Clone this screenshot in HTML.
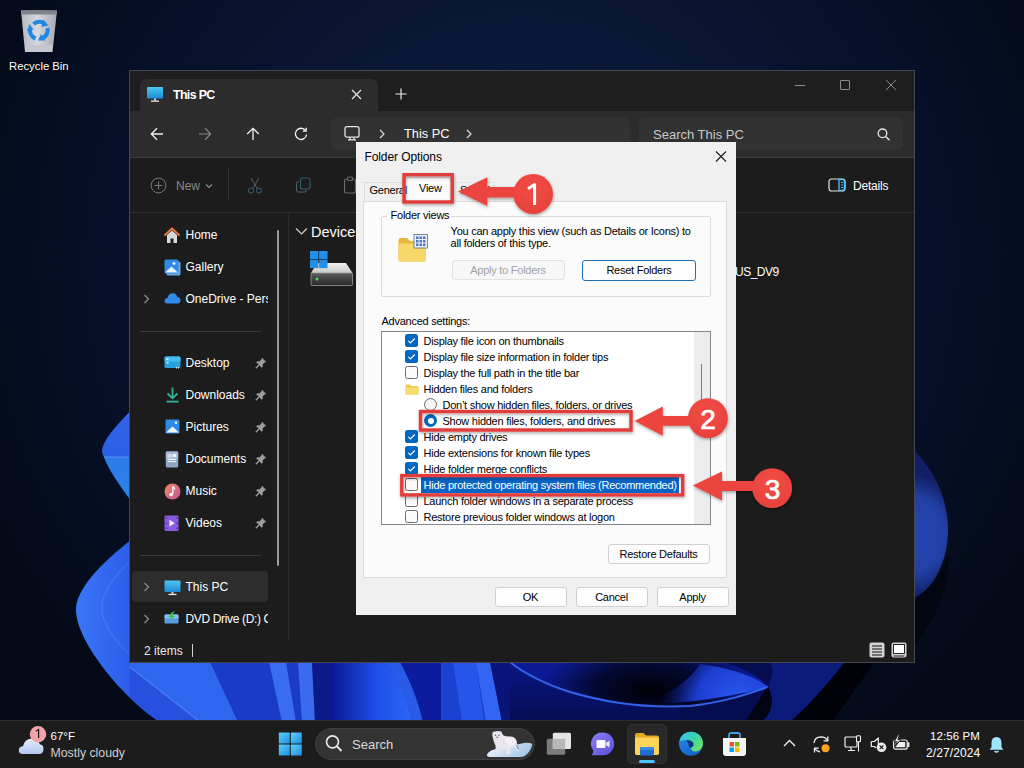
<!DOCTYPE html>
<html><head><meta charset="utf-8">
<style>
*{margin:0;padding:0;box-sizing:border-box}
html,body{width:1024px;height:768px;overflow:hidden;background:#050c1c;font-family:"Liberation Sans",sans-serif}
.a{position:absolute}
.t{position:absolute;white-space:nowrap;line-height:1}
#desk{position:absolute;left:0;top:0;width:1024px;height:768px;background:radial-gradient(ellipse 700px 500px at 520px 560px,#0a1c46 0%,#071333 45%,#050c1f 80%,#040a18 100%)}
/* explorer */
#exp{position:absolute;left:129px;top:70px;width:786px;height:593px;background:#1c1c1c;border:1px solid #44474c;overflow:hidden}
#tabs{position:absolute;left:0;top:0;width:784px;height:40px;background:#1e1e1e}
#tab{position:absolute;left:10px;top:8px;width:238px;height:32px;background:#2c2c2c;border-radius:7px 7px 0 0}
#addr{position:absolute;left:0;top:40px;width:784px;height:47px;background:#2c2c2c;border-bottom:1px solid #3a3a3a}
#cmd{position:absolute;left:0;top:87px;width:784px;height:55px;background:#1c1c1c;border-bottom:1px solid #2f2f2f}
.w{color:#fff}
.nav{position:absolute;left:55px;font-size:12.5px;color:#fff;line-height:1}
/* dialog */
#dlg{position:absolute;left:356px;top:142px;width:380px;height:473px;background:#f0f0f0;font-size:11px;letter-spacing:-0.25px;color:#000}
.btn{position:absolute;background:#fdfdfd;border:1px solid #d0d0d0;border-radius:3px;text-align:center;font-size:11px;line-height:18px;color:#000}
.row{position:absolute;left:41px;font-size:11px;line-height:1;color:#000;white-space:nowrap}
.cb{position:absolute;left:23px;width:13px;height:13px;border-radius:3px}
.cbc{background:#0067c0;}
.cbu{background:#fbfbfb;border:1px solid #8a8a8a}
/* taskbar */
#tb{position:absolute;left:0;top:720px;width:1024px;height:48px;background:#1c1c1c;border-top:1px solid #2e2e2e}
</style></head><body>
<svg id="desk" class="a" style="left:0;top:0" width="1024" height="768" viewBox="0 0 1024 768">
  <defs>
    <radialGradient id="bg" cx="520" cy="260" r="580" gradientUnits="userSpaceOnUse"><stop offset="0" stop-color="#0c1f48"/><stop offset="0.35" stop-color="#0a1838"/><stop offset="0.72" stop-color="#071029"/><stop offset="1" stop-color="#040a18"/></radialGradient>
    <linearGradient id="p1" x1="0" y1="0" x2="0" y2="1"><stop offset="0" stop-color="#3566ea"/><stop offset="1" stop-color="#2a5ee6"/></linearGradient>
    <linearGradient id="p2" x1="0" y1="0" x2="0" y2="1"><stop offset="0" stop-color="#2f78ea"/><stop offset="1" stop-color="#2a86e8"/></linearGradient>
    <linearGradient id="p3" x1="0" y1="0" x2="1" y2="0"><stop offset="0" stop-color="#3272f8"/><stop offset="1" stop-color="#2a58e8"/></linearGradient>
    <radialGradient id="rs" cx="905" cy="535" r="62" gradientUnits="userSpaceOnUse"><stop offset="0" stop-color="#2846b8"/><stop offset="0.65" stop-color="#2240a4"/><stop offset="1" stop-color="#121f66"/></radialGradient>
    <linearGradient id="bt" x1="0" y1="0" x2="1" y2="0"><stop offset="0" stop-color="#2a5cf0"/><stop offset="0.3" stop-color="#2448d8"/><stop offset="0.55" stop-color="#1a36c0"/><stop offset="1" stop-color="#1a34b0"/></linearGradient>
  </defs>
  <rect width="1024" height="768" fill="url(#bg)"/>
  <!-- left upper petal -->
  <path d="M136 405 C122 420 103 438 102 451 C102 454 104 457 107 458 L136 458 Z" fill="url(#p1)"/>
  <path d="M102 451 C106 468 122 488 136 508 L136 457 L106 457 C104 456 102 454 102 451Z" fill="url(#p2)"/>
  <path d="M104 457 H136" stroke="#6a9cf8" stroke-width="1" opacity="0.7"/>
  <!-- left lower petal / bottom swoosh -->
  <linearGradient id="glow" x1="330" y1="0" x2="420" y2="0" gradientUnits="userSpaceOnUse"><stop offset="0" stop-color="#0a1690"/><stop offset="0.5" stop-color="#1e4ee8"/><stop offset="1" stop-color="#2e6cf8"/></linearGradient>
  <linearGradient id="lp" x1="76" y1="0" x2="136" y2="0" gradientUnits="userSpaceOnUse"><stop offset="0" stop-color="#3a76f8"/><stop offset="1" stop-color="#2a5ae8"/></linearGradient>
  <path d="M136 536 C110 556 78 584 76 608 C75 632 100 666 122 690 C135 704 150 716 160 722 L136 722 Z" fill="url(#lp)"/>
  <rect x="130" y="662" width="380" height="60" fill="#1a3ac8"/>
  <path d="M130 662 L210 662 L238 722 L130 722Z" fill="#2e66f0"/>
  <path d="M130 667 L200 722 L130 722Z" fill="#2850de"/>
  <path d="M130 667 L200 722" stroke="#5a8cf8" stroke-width="1.2" opacity="0.7"/>
  <path d="M269 662 L286 662 L296 722 L282 722Z" fill="#3a6cf2"/>
  <path d="M298 662 L312 662 L315 722 L302 722Z" fill="#3a6af0"/>
  <path d="M312 662 L330 662 L330 722 L315 722Z" fill="#0c1a88"/>
  <path d="M330 662 L386 662 C398 680 408 700 412 722 L330 722Z" fill="url(#glow)"/>
  <path d="M386 662 L400 662 C410 680 418 700 423 722 L412 722 C408 700 398 680 386 662Z" fill="#2a5ae8"/>
  <path d="M400 662 L441 662 L441 722 L423 722 C418 700 410 680 400 662Z" fill="#0c1c9c"/>
  <path d="M441 662 L478 662 L488 722 L441 722Z" fill="#1c40d0"/>
  <path d="M453 662 L476 662 L484 722 L462 722Z" fill="#2a5af0" opacity="0.8"/>
  <path d="M476 662 L490 662 L502 722 L486 722Z" fill="#3464f2"/>
  <path d="M490 662 L512 662 L512 722 L502 722Z" fill="#0a1478"/>
  <path d="M40 640 L97 662 C108 676 115 684 122 690 C135 704 150 716 162 724 L40 724 Z" fill="url(#bg)"/>
  <path d="M136 556 C118 572 102 590 102 608 C102 625 118 645 136 660" stroke="#5a8cf8" stroke-width="1" fill="none" opacity="0.6"/>
  <!-- swoosh -->
  <linearGradient id="sw1" x1="0" y1="662" x2="0" y2="722" gradientUnits="userSpaceOnUse"><stop offset="0" stop-color="#0a1888"/><stop offset="1" stop-color="#050c50"/></linearGradient>
  <radialGradient id="swd" cx="650" cy="690" r="110" gradientTransform="translate(650 690) scale(1 0.45) translate(-650 -690)" gradientUnits="userSpaceOnUse"><stop offset="0" stop-color="#000006"/><stop offset="0.5" stop-color="#030830"/><stop offset="1" stop-color="#0c1a96"/></radialGradient>
  <radialGradient id="sw2" cx="740" cy="705" r="80" gradientUnits="userSpaceOnUse"><stop offset="0" stop-color="#2e5cf4"/><stop offset="0.55" stop-color="#1c3ed0"/><stop offset="1" stop-color="#0c1a80" stop-opacity="0"/></radialGradient>
  <rect x="510" y="662" width="370" height="60" fill="url(#sw1)"/>
  <path d="M510 662 L780 662 L780 690 C750 694 720 702 680 706 C640 708 600 700 565 688 C540 680 522 672 510 662Z" fill="url(#swd)"/>
  <path d="M680 706 C720 702 750 694 768 687 C760 676 740 666 720 662 L780 662 L780 722 L680 722Z" fill="#050c50"/>
  <path d="M640 704 C690 704 735 696 768 687 C755 676 730 668 700 664 C690 680 670 695 640 704Z" fill="url(#sw2)"/>
  <path d="M510 662 C525 674 545 684 570 692 C610 704 650 708 690 706 C725 702 748 694 768 687" stroke="#3a6cf6" stroke-width="2" fill="none" opacity="0.9"/>
  <path d="M768 687 C775 700 772 712 762 722 L790 722 C815 700 830 680 845 662 L770 662 C774 670 772 680 768 687Z" fill="#0c1a7a"/>
  <path d="M768 687 C775 700 772 712 762 722 L745 722 C752 712 758 700 768 687Z" fill="#020414"/>
  <path d="M845 662 L876 662 C858 685 845 705 832 722 L790 722 C815 700 830 680 845 662Z" fill="#010208"/>
  <path d="M876 662 L900 662 L900 722 L832 722 C845 705 858 685 876 662Z" fill="url(#bg)"/>
  <!-- right shape -->
  <path d="M900 440 C925 455 948 490 948 530 C948 560 935 585 915 600 L900 600Z" fill="url(#rs)"/>
  <path d="M915 598 C935 585 946 570 948 550 C952 585 935 620 915 645Z" fill="#02050f" opacity="0.9"/>
</svg>

<!-- recycle bin -->
<svg class="a" style="left:0;top:0" width="90" height="80" viewBox="0 0 90 80">
  <defs><linearGradient id="rb" x1="0" x2="1"><stop offset="0" stop-color="#b4b8c0"/><stop offset="0.45" stop-color="#d6d9de"/><stop offset="1" stop-color="#a4a8b0"/></linearGradient>
  <linearGradient id="rbv" x1="0" y1="0" x2="0" y2="1"><stop offset="0" stop-color="#ffffff" stop-opacity="0.15"/><stop offset="1" stop-color="#ffffff" stop-opacity="0"/></linearGradient></defs>
  <path d="M21 10.5 L57 10.5 L52.5 52 L25 52 Z" fill="url(#rb)"/>
  <path d="M21 10.5 L57 10.5 L56.3 14.5 L21.6 14.5 Z" fill="#7e838c"/>
  <path d="M25 45 L52.5 45 L52 52 L25.6 52Z" fill="#c4c8ce"/>
  <g fill="none" stroke="#1f8ae6" stroke-width="4.2" stroke-linecap="butt">
    <path d="M33.5 24 A9 9 0 0 1 44.5 23.5"/>
    <path d="M47.5 28 A9 9 0 0 1 42 38.5"/>
    <path d="M35.5 38.5 A9 9 0 0 1 30 29"/>
  </g>
  <g fill="#1f8ae6"><path d="M43 19.5 L48.5 25.5 L41.5 27Z"/><path d="M45.5 40.5 L38 40.5 L41 34Z"/><path d="M27 31 L29.5 24 L33.5 29.5Z"/></g>
</svg>
<div class="t" style="left:9px;top:61px;font-size:11.3px;color:#fff;text-shadow:0 1px 2px #000">Recycle Bin</div>

<!-- explorer -->
<div id="exp">
  <div id="tabs"></div>
  <div id="tab"></div>
  <div id="addr"></div>
  <div id="cmd"></div>
</div>
<!-- tab content -->
<svg class="a" style="left:146px;top:86px" width="18" height="17" viewBox="0 0 18 17">
  <defs><linearGradient id="mon" x1="0" y1="0" x2="0" y2="1"><stop offset="0" stop-color="#4cc8f0"/><stop offset="1" stop-color="#1f8ad6"/></linearGradient></defs>
  <rect x="1" y="1" width="16" height="11.5" rx="0.8" fill="url(#mon)"/>
  <rect x="8" y="12.5" width="2" height="2" fill="#d8d8d8"/>
  <rect x="5" y="14.5" width="8" height="1.3" fill="#e8e8e8"/>
</svg>
<div class="t" style="left:173px;top:88.6px;font-size:12.4px;font-weight:bold;color:#fff;letter-spacing:-0.65px">This PC</div>
<svg class="a" style="left:351px;top:89px" width="11" height="11" viewBox="0 0 11 11"><path d="M1 1 L10 10 M10 1 L1 10" stroke="#e8e8e8" stroke-width="1.2"/></svg>
<svg class="a" style="left:395px;top:88px" width="12" height="12" viewBox="0 0 12 12"><path d="M6 0.5 V11.5 M0.5 6 H11.5" stroke="#e8e8e8" stroke-width="1.2"/></svg>
<!-- window controls -->
<div class="a" style="left:795px;top:85px;width:10px;height:1px;background:#8c8c8c"></div>
<div class="a" style="left:840px;top:80px;width:10px;height:10px;border:1px solid #8c8c8c;border-radius:1px"></div>
<svg class="a" style="left:885px;top:79px" width="12" height="12" viewBox="0 0 12 12"><path d="M1 1 L11 11 M11 1 L1 11" stroke="#8c8c8c" stroke-width="1"/></svg>
<!-- nav buttons -->
<svg class="a" style="left:150px;top:127px" width="14" height="14" viewBox="0 0 14 14"><path d="M13 7 H1.5 M7 1.2 L1.3 7 L7 12.8" stroke="#f0f0f0" stroke-width="1.3" fill="none"/></svg>
<svg class="a" style="left:198px;top:127px" width="14" height="14" viewBox="0 0 14 14"><path d="M1 7 H12.5 M7 1.2 L12.7 7 L7 12.8" stroke="#8a8a8a" stroke-width="1.2" fill="none"/></svg>
<svg class="a" style="left:246px;top:127px" width="14" height="14" viewBox="0 0 14 14"><path d="M7 13 V1.5 M1.2 7 L7 1.3 L12.8 7" stroke="#f0f0f0" stroke-width="1.3" fill="none"/></svg>
<svg class="a" style="left:294px;top:127px" width="14" height="14" viewBox="0 0 14 14"><path d="M11.6 3.6 A5.6 5.6 0 1 0 12.6 7.5" stroke="#f0f0f0" stroke-width="1.3" fill="none"/><path d="M12.2 0.8 V4.2 H8.8" stroke="#f0f0f0" stroke-width="1.3" fill="none"/></svg>
<!-- address box -->
<div class="a" style="left:331px;top:118px;width:299px;height:32px;background:#323232;border-radius:5px"></div>
<svg class="a" style="left:344px;top:126px" width="16" height="15" viewBox="0 0 16 15"><rect x="1" y="0.7" width="14" height="10.5" rx="2" stroke="#e6e6e6" stroke-width="1.3" fill="none"/><path d="M6 11.5 V13.5 M10 11.5 V13.5 M4 13.8 H12" stroke="#e6e6e6" stroke-width="1.2"/></svg>
<svg class="a" style="left:378px;top:129px" width="8" height="10" viewBox="0 0 8 10"><path d="M2 1 L6 5 L2 9" stroke="#dcdcdc" stroke-width="1.2" fill="none"/></svg>
<div class="t" style="left:404px;top:128px;font-size:12.8px;color:#fff">This PC</div>
<svg class="a" style="left:465px;top:129px" width="8" height="10" viewBox="0 0 8 10"><path d="M2 1 L6 5 L2 9" stroke="#dcdcdc" stroke-width="1.2" fill="none"/></svg>
<!-- search box -->
<div class="a" style="left:639px;top:118px;width:264px;height:32px;background:#323232;border-radius:5px"></div>
<div class="t" style="left:653px;top:128px;font-size:13px;color:#c8c8c8">Search This PC</div>
<svg class="a" style="left:877px;top:128px" width="14" height="13" viewBox="0 0 14 13"><circle cx="5.5" cy="5.3" r="4.3" stroke="#e8e8e8" stroke-width="1.3" fill="none"/><path d="M8.6 8.4 L12.5 12.2" stroke="#e8e8e8" stroke-width="1.4"/></svg>
<!-- command bar -->
<svg class="a" style="left:150px;top:177px" width="17" height="17" viewBox="0 0 17 17"><circle cx="8.5" cy="8.5" r="7.4" stroke="#7a7a7a" stroke-width="1" fill="none"/><path d="M8.5 4.5 V12.5 M4.5 8.5 H12.5" stroke="#7a7a7a" stroke-width="1"/></svg>
<div class="t" style="left:176px;top:180px;font-size:12px;color:#8a8a8a">New</div>
<svg class="a" style="left:204.5px;top:182.5px" width="8" height="6" viewBox="0 0 8 6"><path d="M1 1.5 L4 4.5 L7 1.5" stroke="#8e8e8e" stroke-width="1.1" fill="none"/></svg>
<div class="a" style="left:228px;top:169px;width:1px;height:30px;background:#343434"></div>
<svg class="a" style="left:247px;top:177px" width="16" height="17" viewBox="0 0 16 17"><path d="M4 1 L10.5 12 M12 1 L5.5 12" stroke="#5a6068" stroke-width="1" fill="none"/><circle cx="4" cy="13.5" r="2.5" stroke="#37627a" stroke-width="1" fill="none"/><circle cx="12" cy="13.5" r="2.5" stroke="#37627a" stroke-width="1" fill="none"/></svg>
<svg class="a" style="left:295px;top:177px" width="17" height="17" viewBox="0 0 17 17"><rect x="5.5" y="1" width="9.5" height="11" rx="2" stroke="#2f5f7a" stroke-width="1.1" fill="none"/><path d="M3.5 4.5 Q1.5 4.5 1.5 6.5 V13 Q1.5 15 3.5 15 H9.5 Q11.5 15 11.5 13" stroke="#5a6068" stroke-width="1" fill="none"/></svg>
<svg class="a" style="left:343px;top:176px" width="14" height="18" viewBox="0 0 14 18"><rect x="1.5" y="3" width="11" height="14" rx="2" stroke="#6a6a6a" stroke-width="1.1" fill="none"/><rect x="4.5" y="1" width="5" height="3.5" rx="1" stroke="#6a6a6a" stroke-width="1.1" fill="#1c1c1c"/></svg>
<svg class="a" style="left:828px;top:178px" width="18" height="14" viewBox="0 0 18 14"><rect x="1" y="1" width="16" height="12" rx="2.5" stroke="#e6e6e6" stroke-width="1.2" fill="none"/><path d="M11 1 V13" stroke="#4cc2ff" stroke-width="1.3"/><path d="M11.5 1.6 H14.5 Q16.4 1.6 16.4 3.5 V10.5 Q16.4 12.4 14.5 12.4 H11.5" stroke="#4cc2ff" stroke-width="1.2" fill="none"/><path d="M13 4.5 H15 M13 7 H15 M13 9.5 H15" stroke="#4cc2ff" stroke-width="1"/></svg>
<div class="t" style="left:853px;top:179.5px;font-size:12px;color:#fff;letter-spacing:-0.2px">Details</div>


<!-- nav pane -->
<div class="a" style="left:288px;top:212px;width:1px;height:428px;background:#2a2a2a"></div>
<div class="a" style="left:277px;top:230px;width:2px;height:336px;background:#9a9a9a;border-radius:1px"></div>
<div class="a" style="left:140px;top:331px;width:121px;height:1px;background:#3a3a3a"></div>
<div class="a" style="left:140px;top:555px;width:121px;height:1px;background:#3a3a3a"></div>
<div class="a" style="left:132px;top:571px;width:136px;height:31px;background:#2d2d2d;border-radius:4px"></div>
<div class="a" style="left:131px;top:212px;width:137px;height:428px;overflow:hidden">
  <div class="t" style="left:54.5px;top:17px;font-size:12px;color:#fff">Home</div>
  <div class="t" style="left:54.5px;top:49px;font-size:12px;color:#fff">Gallery</div>
  <div class="t" style="left:54.5px;top:81px;font-size:12px;color:#fff">OneDrive - Personal</div>
  <div class="t" style="left:54.5px;top:145px;font-size:12px;color:#fff">Desktop</div>
  <div class="t" style="left:54.5px;top:177px;font-size:12px;color:#fff">Downloads</div>
  <div class="t" style="left:54.5px;top:209px;font-size:12px;color:#fff">Pictures</div>
  <div class="t" style="left:54.5px;top:241px;font-size:12px;color:#fff">Documents</div>
  <div class="t" style="left:54.5px;top:273px;font-size:12px;color:#fff">Music</div>
  <div class="t" style="left:54.5px;top:305px;font-size:12px;color:#fff">Videos</div>
  <div class="t" style="left:54.5px;top:369px;font-size:12px;color:#fff">This PC</div>
  <div class="t" style="left:54.5px;top:401px;font-size:12px;color:#fff;letter-spacing:-0.35px">DVD Drive (D:) CCCOMA_X64FRE</div>
</div>
<!-- chevrons -->
<svg class="a" style="left:143px;top:294px" width="8" height="10" viewBox="0 0 8 10"><path d="M1.5 1 L5.5 5 L1.5 9" stroke="#8a8a8a" stroke-width="1.3" fill="none"/></svg>
<svg class="a" style="left:143px;top:582px" width="8" height="10" viewBox="0 0 8 10"><path d="M1.5 1 L5.5 5 L1.5 9" stroke="#8a8a8a" stroke-width="1.3" fill="none"/></svg>
<svg class="a" style="left:143px;top:614px" width="8" height="10" viewBox="0 0 8 10"><path d="M1.5 1 L5.5 5 L1.5 9" stroke="#8a8a8a" stroke-width="1.3" fill="none"/></svg>
<!-- nav icons -->
<svg class="a" style="left:164px;top:227px" width="16" height="17" viewBox="0 0 16 17"><path d="M3 8 V16 H6.5 V11.5 H9.5 V16 H13 V8 L8 3.5 Z" fill="#d9d9d9"/><path d="M0.5 8.5 L8 1.5 L15.5 8.5" stroke="#e0773a" stroke-width="2.2" fill="none" stroke-linejoin="round"/></svg>
<svg class="a" style="left:164px;top:259px" width="17" height="17" viewBox="0 0 17 17"><rect x="2.5" y="2.5" width="14" height="14" rx="1.5" fill="#6aa8e8"/><rect x="0.5" y="0.5" width="14" height="14" rx="1.5" fill="#2f8ae6"/><path d="M1 13.5 L7.5 7.5 L14 13.5 Z" fill="#e8f2ff"/><circle cx="10" cy="4.5" r="1.4" fill="#e8f2ff"/></svg>
<svg class="a" style="left:164px;top:292px" width="17" height="12" viewBox="0 0 17 12"><path d="M3.5 11.5 Q0.3 11.5 0.5 8.5 Q0.8 6 3.5 6 Q4.5 1 9 1.2 Q12.6 1.4 13.3 5 Q16.5 5.3 16.5 8.3 Q16.5 11.5 13.5 11.5 Z" fill="#2e8be8"/></svg>
<svg class="a" style="left:164px;top:356px" width="17" height="13" viewBox="0 0 17 13"><rect x="0.5" y="0.5" width="16" height="11.5" rx="1.5" fill="#27a4e0"/><rect x="0.5" y="0.5" width="16" height="5" rx="1.5" fill="#45bdf0"/><rect x="2.5" y="2.3" width="2" height="1.6" fill="#e8f6ff"/><rect x="2.5" y="5.8" width="2" height="1.6" fill="#e8f6ff"/><rect x="12" y="11" width="1" height="1.5" fill="#e8f6ff"/><rect x="14" y="11" width="1" height="1.5" fill="#e8f6ff"/></svg>
<svg class="a" style="left:166px;top:387px" width="13" height="16" viewBox="0 0 13 16"><path d="M6.5 0.5 V11 M1.5 6.5 L6.5 11.3 L11.5 6.5" stroke="#2fb59b" stroke-width="1.8" fill="none"/><path d="M0.5 14.6 H12.5" stroke="#2fb59b" stroke-width="1.8"/></svg>
<svg class="a" style="left:165px;top:419px" width="15" height="15" viewBox="0 0 15 15"><rect x="0.5" y="0.5" width="14" height="14" rx="1.2" fill="#2f8ae6"/><path d="M1 13.5 L7.5 7.5 L14 13.5 Z" fill="#f0f6ff"/><circle cx="11" cy="3.8" r="1.3" fill="#f0f6ff"/></svg>
<svg class="a" style="left:165px;top:451px" width="14" height="17" viewBox="0 0 14 17"><rect x="0.8" y="0.5" width="12.4" height="16" rx="1.2" fill="#8ea8c8"/><rect x="0.8" y="0.5" width="12.4" height="8" rx="1.2" fill="#a8bcd6"/><path d="M2.8 4 H7 M2.8 6 H7 M2.8 8.5 H11 M2.8 10.5 H11" stroke="#f4f8ff" stroke-width="1"/><rect x="8" y="3" width="3" height="3" fill="#f4f8ff"/></svg>
<svg class="a" style="left:164px;top:483px" width="17" height="17" viewBox="0 0 17 17"><defs><linearGradient id="mus" x1="0" y1="0" x2="1" y2="1"><stop offset="0" stop-color="#f08a5a"/><stop offset="1" stop-color="#c2549a"/></linearGradient></defs><circle cx="8.5" cy="8.5" r="8" fill="url(#mus)"/><path d="M8.8 3.5 V11" stroke="#fff" stroke-width="1.3"/><circle cx="7.2" cy="11.5" r="1.8" fill="#fff"/><path d="M8.8 3.5 Q11 4.5 10.8 6.5" stroke="#fff" stroke-width="1.1" fill="none"/></svg>
<svg class="a" style="left:164px;top:515px" width="15" height="17" viewBox="0 0 15 17"><rect x="0.5" y="0.5" width="14" height="15.5" rx="1.2" fill="#8a5ae0"/><path d="M5.5 4.8 L10.8 8.2 L5.5 11.6 Z" fill="#f4eeff"/><g fill="#5a2fb0"><rect x="1.6" y="2.5" width="1.5" height="1.5"/><rect x="1.6" y="7.5" width="1.5" height="1.5"/><rect x="1.6" y="12.5" width="1.5" height="1.5"/><rect x="12" y="2.5" width="1.5" height="1.5"/><rect x="12" y="7.5" width="1.5" height="1.5"/><rect x="12" y="12.5" width="1.5" height="1.5"/></g></svg>
<svg class="a" style="left:164px;top:580px" width="17" height="16" viewBox="0 0 17 16"><rect x="0.5" y="0.5" width="16" height="11.5" rx="0.8" fill="url(#mon)"/><rect x="7.5" y="12" width="2" height="1.8" fill="#d8d8d8"/><rect x="4.5" y="13.8" width="8" height="1.3" fill="#e8e8e8"/></svg>
<svg class="a" style="left:164px;top:609px" width="16" height="15" viewBox="0 0 16 15"><rect x="0.5" y="5.5" width="14" height="9" rx="1.2" fill="#5b9ce0"/><rect x="0.5" y="5.5" width="14" height="4" rx="1.2" fill="#8bbcf0"/><path d="M7.5 10 L4.2 7 H6.2 Q6.5 3 11 2.2 Q8.5 3.8 8.8 7 H10.8 Z" fill="#2ecc40"/></svg>
<!-- pins -->
<svg class="a" style="left:255px;top:357px" width="12" height="12" viewBox="0 0 12 12"><path d="M7 0.8 L11.2 5 L9.6 5.6 L7.6 7.6 L7.8 9.8 L6.8 10.8 L1.2 5.2 L2.2 4.2 L4.4 4.4 L6.4 2.4 Z" fill="#9c9c9c"/><path d="M4 8 L0.8 11.2" stroke="#9c9c9c" stroke-width="1.3"/></svg>
<svg class="a" style="left:255px;top:389px" width="12" height="12" viewBox="0 0 12 12"><path d="M7 0.8 L11.2 5 L9.6 5.6 L7.6 7.6 L7.8 9.8 L6.8 10.8 L1.2 5.2 L2.2 4.2 L4.4 4.4 L6.4 2.4 Z" fill="#9c9c9c"/><path d="M4 8 L0.8 11.2" stroke="#9c9c9c" stroke-width="1.3"/></svg>
<svg class="a" style="left:255px;top:421px" width="12" height="12" viewBox="0 0 12 12"><path d="M7 0.8 L11.2 5 L9.6 5.6 L7.6 7.6 L7.8 9.8 L6.8 10.8 L1.2 5.2 L2.2 4.2 L4.4 4.4 L6.4 2.4 Z" fill="#9c9c9c"/><path d="M4 8 L0.8 11.2" stroke="#9c9c9c" stroke-width="1.3"/></svg>
<svg class="a" style="left:255px;top:453px" width="12" height="12" viewBox="0 0 12 12"><path d="M7 0.8 L11.2 5 L9.6 5.6 L7.6 7.6 L7.8 9.8 L6.8 10.8 L1.2 5.2 L2.2 4.2 L4.4 4.4 L6.4 2.4 Z" fill="#9c9c9c"/><path d="M4 8 L0.8 11.2" stroke="#9c9c9c" stroke-width="1.3"/></svg>
<svg class="a" style="left:255px;top:485px" width="12" height="12" viewBox="0 0 12 12"><path d="M7 0.8 L11.2 5 L9.6 5.6 L7.6 7.6 L7.8 9.8 L6.8 10.8 L1.2 5.2 L2.2 4.2 L4.4 4.4 L6.4 2.4 Z" fill="#9c9c9c"/><path d="M4 8 L0.8 11.2" stroke="#9c9c9c" stroke-width="1.3"/></svg>
<svg class="a" style="left:255px;top:517px" width="12" height="12" viewBox="0 0 12 12"><path d="M7 0.8 L11.2 5 L9.6 5.6 L7.6 7.6 L7.8 9.8 L6.8 10.8 L1.2 5.2 L2.2 4.2 L4.4 4.4 L6.4 2.4 Z" fill="#9c9c9c"/><path d="M4 8 L0.8 11.2" stroke="#9c9c9c" stroke-width="1.3"/></svg>
<!-- content -->
<svg class="a" style="left:295px;top:227px" width="13" height="9" viewBox="0 0 13 9"><path d="M1 1.5 L6.5 7 L12 1.5" stroke="#d0d0d0" stroke-width="1.2" fill="none"/></svg>
<div class="t" style="left:311px;top:225px;font-size:14.5px;color:#fff">Devices and drives</div>
<svg class="a" style="left:309px;top:250px" width="45" height="37" viewBox="0 0 45 37"><defs><linearGradient id="drv" x1="0" y1="0" x2="0" y2="1"><stop offset="0" stop-color="#5a5a5a"/><stop offset="1" stop-color="#2a2a2a"/></linearGradient><linearGradient id="drvt" x1="0" y1="0" x2="0" y2="1"><stop offset="0" stop-color="#f0f0f0"/><stop offset="1" stop-color="#c8c8c8"/></linearGradient></defs>
  <path d="M2 23 L8 13 H37 L43.5 23 Z" fill="url(#drvt)"/>
  <rect x="2" y="23" width="41.5" height="12.5" rx="1" fill="url(#drv)" stroke="#9a9a9a" stroke-width="0.8"/>
  <circle cx="8" cy="29" r="1.5" fill="#3ade5a"/>
  <g fill="#2290e8"><rect x="1" y="1" width="8.4" height="8.2"/><rect x="10.1" y="1" width="8.4" height="8.2"/><rect x="1" y="9.9" width="8.4" height="8.2"/><rect x="10.1" y="9.9" width="8.4" height="8.2"/></g>
</svg>
<div class="t" style="left:735px;top:266px;font-size:12px;color:#fff;letter-spacing:-0.5px">US_DV9</div>
<!-- status bar -->
<div class="t" style="left:144px;top:645px;font-size:12px;color:#e8e8e8">2 items</div>
<div class="a" style="left:192px;top:644px;width:1px;height:13px;background:#d0d0d0"></div>
<svg class="a" style="left:868px;top:641px" width="40" height="18" viewBox="0 0 40 18"><rect x="1.5" y="1.5" width="15" height="15" rx="2" fill="#d4d4d4"/><path d="M4 5 H14 M4 8 H14 M4 11 H14 M4 14 H14" stroke="#111" stroke-width="1"/><rect x="23.5" y="1.5" width="15" height="15" rx="2" fill="#d4d4d4"/><rect x="25.5" y="3.5" width="11" height="9" fill="#fff" stroke="#111" stroke-width="0.9"/><path d="M25.5 15 H36.5" stroke="#111" stroke-width="0.9"/></svg>

<!-- dialog -->
<div id="dlg">
  <div class="t" style="left:8.5px;top:8.6px;font-size:12px;letter-spacing:-0.1px;color:#000">Folder Options</div>
  <svg class="a" style="left:359px;top:9px" width="12" height="11" viewBox="0 0 12 11"><path d="M1 0.5 L11 10.5 M11 0.5 L1 10.5" stroke="#1a1a1a" stroke-width="1.1"/></svg>
  <!-- tabs -->
  <div class="a" style="left:7.5px;top:39.5px;width:43px;height:20px;background:#f0f0f0;border:1px solid #dcdcdc;border-bottom:none"></div>
  <div class="a" style="left:49px;top:35px;width:46px;height:25px;background:#fbfbfb;border:1px solid #dcdcdc;border-bottom:none"></div>
  <div class="a" style="left:94px;top:39.5px;width:45px;height:20px;background:#f0f0f0;border:1px solid #e4e4e4;border-bottom:none;border-left:none"></div>
  <div class="t" style="left:13.5px;top:43.1px;font-size:11px;letter-spacing:-0.25px">General</div>
  <div class="t" style="left:63px;top:41.3px;font-size:11px;letter-spacing:-0.25px">View</div>
  <div class="t" style="left:104px;top:43.1px;font-size:11px;letter-spacing:-0.25px">Search</div>
  <!-- tab page -->
  <div class="a" style="left:7px;top:58.5px;width:364px;height:377px;background:#fbfbfb;border:1px solid #dcdcdc;border-top-color:#dcdcdc"></div>
  <div class="a" style="left:50px;top:58px;width:44px;height:2px;background:#fbfbfb"></div>
  <!-- group -->
  <div class="a" style="left:25px;top:73.5px;width:330px;height:81px;border:1px solid #dcdcdc;border-radius:2px"></div>
  <div class="a" style="left:31px;top:68px;width:64px;height:10px;background:#fbfbfb"></div>
  <div class="t" style="left:34.6px;top:68.3px;font-size:11px;letter-spacing:-0.25px">Folder views</div>
  <svg class="a" style="left:42px;top:92px" width="30" height="28" viewBox="0 0 30 28">
    <path d="M0.5 6 Q0.5 4 2.5 4 H9 L12 7 H26 Q28 7 28 9 V25.5 Q28 27.5 26 27.5 H2.5 Q0.5 27.5 0.5 25.5 Z" fill="#e9b43a"/>
    <path d="M0.5 11 Q0.5 9.5 2 9.5 H26.5 Q28 9.5 28 11 V25.5 Q28 27.5 26 27.5 H2.5 Q0.5 27.5 0.5 25.5 Z" fill="#f7d66a"/>
    <rect x="16" y="0.5" width="13.5" height="13.5" fill="#eef2f8" stroke="#5a6a8a" stroke-width="0.8"/>
    <g fill="#4a78c8"><rect x="18" y="2.5" width="2.5" height="2.5"/><rect x="21.5" y="2.5" width="2.5" height="2.5"/><rect x="25" y="2.5" width="2.5" height="2.5"/><rect x="18" y="6" width="2.5" height="2.5"/><rect x="21.5" y="6" width="2.5" height="2.5"/><rect x="25" y="6" width="2.5" height="2.5"/><rect x="18" y="9.5" width="2.5" height="2.5"/><rect x="21.5" y="9.5" width="2.5" height="2.5"/><rect x="25" y="9.5" width="2.5" height="2.5"/></g>
  </svg>
  <div class="t" style="left:94.6px;top:83.7px;font-size:11px;letter-spacing:-0.25px">You can apply this view (such as Details or Icons) to</div>
  <div class="t" style="left:94.6px;top:96.2px;font-size:11px;letter-spacing:-0.25px">all folders of this type.</div>
  <div class="btn" style="left:95.5px;top:118px;width:113px;height:20px;color:#a2a2a2;border-color:#e2e2e2;background:#f7f7f7;letter-spacing:-0.25px">Apply to Folders</div>
  <div class="btn" style="left:226px;top:117.5px;width:114px;height:21px;border:1px solid #1f6fb8;letter-spacing:-0.25px;line-height:19px">Reset Folders</div>
  <div class="t" style="left:25.5px;top:174.1px;font-size:11px;letter-spacing:-0.25px">Advanced settings:</div>
  <!-- list -->
  <div class="a" style="left:25px;top:189px;width:330px;height:194px;background:#fff;border:1px solid #828790"></div>
  <div class="a" style="left:337.5px;top:190px;width:16.5px;height:192px;background:#ececec"></div>
  <div class="a" style="left:344.5px;top:222px;width:1.5px;height:62px;background:#7a7a7a"></div>
<div class="a" style="left:49px;top:192.0px;width:13px;height:13px;background:#0067c0;border-radius:2.5px"><svg width="13" height="13" viewBox="0 0 13 13" style="position:absolute;left:0;top:0"><path d="M3.3 6.8 L5.4 8.9 L9.8 4.5" stroke="#fff" stroke-width="1.1" fill="none"/></svg></div>
<div class="t" style="left:67.5px;top:193.89px;font-size:11px;letter-spacing:-0.25px;color:#000">Display file icon on thumbnails</div>
<div class="a" style="left:49px;top:208.0px;width:13px;height:13px;background:#0067c0;border-radius:2.5px"><svg width="13" height="13" viewBox="0 0 13 13" style="position:absolute;left:0;top:0"><path d="M3.3 6.8 L5.4 8.9 L9.8 4.5" stroke="#fff" stroke-width="1.1" fill="none"/></svg></div>
<div class="t" style="left:67.5px;top:209.89px;font-size:11px;letter-spacing:-0.25px;color:#000">Display file size information in folder tips</div>
<div class="a" style="left:49px;top:224.0px;width:13px;height:13px;background:#fafafa;border:1px solid #6a6a6a;border-radius:2.5px"></div>
<div class="t" style="left:67.5px;top:225.89px;font-size:11px;letter-spacing:-0.25px;color:#000">Display the full path in the title bar</div>
<svg class="a" style="left:48.5px;top:241.5px" width="14" height="11" viewBox="0 0 14 11"><path d="M0.5 1.5 Q0.5 0.5 1.5 0.5 H5 L6.5 2 H12.5 Q13.5 2 13.5 3 V9.5 Q13.5 10.5 12.5 10.5 H1.5 Q0.5 10.5 0.5 9.5 Z" fill="#f2c94c"/><path d="M0.5 3.5 H13.5 V9.5 Q13.5 10.5 12.5 10.5 H1.5 Q0.5 10.5 0.5 9.5 Z" fill="#f8dc72"/></svg>
<div class="t" style="left:67.5px;top:241.89px;font-size:11px;letter-spacing:-0.25px;color:#000">Hidden files and folders</div>
<div class="a" style="left:68px;top:256.0px;width:13px;height:13px;background:#f6f6f6;border:1px solid #6a6a6a;border-radius:50%"></div>
<div class="t" style="left:86.5px;top:257.89px;font-size:11px;letter-spacing:-0.25px;color:#000">Don’t show hidden files, folders, or drives</div>
<div class="a" style="left:68px;top:272.0px;width:13px;height:13px;background:#0067c0;border-radius:50%"><div class="a" style="left:3.5px;top:3.5px;width:6px;height:6px;background:#fff;border-radius:50%"></div></div>
<div class="t" style="left:86.5px;top:273.89px;font-size:11px;letter-spacing:-0.25px;color:#000">Show hidden files, folders, and drives</div>
<div class="a" style="left:49px;top:288.0px;width:13px;height:13px;background:#0067c0;border-radius:2.5px"><svg width="13" height="13" viewBox="0 0 13 13" style="position:absolute;left:0;top:0"><path d="M3.3 6.8 L5.4 8.9 L9.8 4.5" stroke="#fff" stroke-width="1.1" fill="none"/></svg></div>
<div class="t" style="left:67.5px;top:289.89px;font-size:11px;letter-spacing:-0.25px;color:#000">Hide empty drives</div>
<div class="a" style="left:49px;top:304.0px;width:13px;height:13px;background:#0067c0;border-radius:2.5px"><svg width="13" height="13" viewBox="0 0 13 13" style="position:absolute;left:0;top:0"><path d="M3.3 6.8 L5.4 8.9 L9.8 4.5" stroke="#fff" stroke-width="1.1" fill="none"/></svg></div>
<div class="t" style="left:67.5px;top:305.89px;font-size:11px;letter-spacing:-0.25px;color:#000">Hide extensions for known file types</div>
<div class="a" style="left:49px;top:320.0px;width:13px;height:13px;background:#0067c0;border-radius:2.5px"><svg width="13" height="13" viewBox="0 0 13 13" style="position:absolute;left:0;top:0"><path d="M3.3 6.8 L5.4 8.9 L9.8 4.5" stroke="#fff" stroke-width="1.1" fill="none"/></svg></div>
<div class="t" style="left:67.5px;top:321.89px;font-size:11px;letter-spacing:-0.25px;color:#000">Hide folder merge conflicts</div>
<div class="a" style="left:49px;top:336.0px;width:13px;height:13px;background:#fafafa;border:1px solid #6a6a6a;border-radius:2.5px"></div>
<div class="a" style="left:65px;top:334.5px;width:257.5px;height:16px;background:#0a64c6"></div>
<div class="t" style="left:67.5px;top:337.89px;font-size:11px;letter-spacing:-0.25px;color:#fff">Hide protected operating system files (Recommended)</div>
<div class="a" style="left:49px;top:352.0px;width:13px;height:13px;background:#fafafa;border:1px solid #6a6a6a;border-radius:2.5px"></div>
<div class="t" style="left:67.5px;top:353.89px;font-size:11px;letter-spacing:-0.25px;color:#000">Launch folder windows in a separate process</div>
<div class="a" style="left:49px;top:368.0px;width:13px;height:13px;background:#fafafa;border:1px solid #6a6a6a;border-radius:2.5px"></div>
<div class="t" style="left:67.5px;top:369.89px;font-size:11px;letter-spacing:-0.25px;color:#000">Restore previous folder windows at logon</div>
  <div class="btn" style="left:251.5px;top:401.5px;width:102px;height:20px;letter-spacing:-0.25px">Restore Defaults</div>
  <div class="btn" style="left:138.5px;top:444.5px;width:72px;height:20px;letter-spacing:-0.25px">OK</div>
  <div class="btn" style="left:219.5px;top:444.5px;width:72px;height:20px;letter-spacing:-0.25px">Cancel</div>
  <div class="btn" style="left:300.5px;top:444.5px;width:72px;height:20px;letter-spacing:-0.25px">Apply</div>
</div>

<!-- annotations -->
<svg class="a" style="left:0;top:0" width="1024" height="768" viewBox="0 0 1024 768">
  <defs>
    <filter id="sh" x="-20%" y="-20%" width="140%" height="150%"><feDropShadow dx="0.5" dy="1.5" stdDeviation="1.6" flood-color="#000" flood-opacity="0.35"/></filter>
    <radialGradient id="cg" cx="0.45" cy="0.35" r="0.7"><stop offset="0" stop-color="#f24c45"/><stop offset="1" stop-color="#e6413c"/></radialGradient>
  </defs>
  <g filter="url(#sh)">
    <rect x="404" y="174.7" width="48.2" height="27.3" fill="none" stroke="#e23c3c" stroke-width="3.4"/>
    <rect x="420.5" y="411.5" width="210.5" height="18.5" fill="none" stroke="#e23c3c" stroke-width="3.4"/>
    <rect x="401.8" y="475.6" width="280.9" height="19.3" fill="none" stroke="#e23c3c" stroke-width="3.4"/>
  </g>
  <g filter="url(#sh)" fill="#ec443f">
    <path d="M458 191.6 L487.3 177.3 L487.3 187 L520 187 L520 197.5 L487.3 197.5 L487.3 206 Z"/>
    <circle cx="533.1" cy="194" r="19.9" fill="url(#cg)"/>
    <path d="M634.6 421 L662.8 406.4 L662.8 416 L695 416 L695 425.7 L662.8 425.7 L662.8 435.7 Z"/>
    <circle cx="707.9" cy="418.1" r="19.9" fill="url(#cg)"/>
    <path d="M692.9 485.5 L722 471.5 L722 481.1 L760 481.1 L760 491 L722 491 L722 500.4 Z"/>
    <circle cx="772.2" cy="488.1" r="19.9" fill="url(#cg)"/>
  </g>
  <path d="M528 188.8 L534.6 184.6 V205" stroke="#fff" stroke-width="3" fill="none" stroke-linejoin="round"/>
  <g fill="#fff" stroke="#fff" stroke-width="0.7" font-family="Liberation Sans" font-size="28" text-anchor="middle">
    
    <text x="708" y="428.7">2</text>
    <text x="772.5" y="498.5">3</text>
  </g>
</svg>

<!-- taskbar -->
<div id="tb"></div>
<!-- weather -->
<svg class="a" style="left:17px;top:724px" width="32" height="34" viewBox="0 0 32 34">
  <defs><linearGradient id="cld" x1="0" y1="0" x2="0" y2="1"><stop offset="0" stop-color="#e6eefc"/><stop offset="1" stop-color="#b4c6f2"/></linearGradient></defs>
  <path d="M6 30 Q1.5 30 1.8 26 Q2.2 22.5 6 22.3 Q7.5 15 14.5 14.5 Q21 14.5 23 20.5 Q26.5 20.3 26.5 25 Q26.5 30 22 30 Z" fill="url(#cld)"/>
  <circle cx="21" cy="10.2" r="8.2" fill="#f3a2a9"/>
  <path d="M19 7.2 L21.6 5.6 V14" stroke="#1a1a1a" stroke-width="1.2" fill="none"/>
</svg>
<div class="t" style="left:50.5px;top:730.5px;font-size:11.5px;color:#fff">67°F</div>
<div class="t" style="left:50.5px;top:746.5px;font-size:12.3px;color:#cfcfcf">Mostly cloudy</div>
<!-- start -->
<svg class="a" style="left:278px;top:732px" width="25" height="25" viewBox="0 0 25 25">
  <defs><linearGradient id="win" x1="0" y1="0" x2="1" y2="1"><stop offset="0" stop-color="#5ed0fa"/><stop offset="1" stop-color="#1e8ee0"/></linearGradient></defs>
  <g fill="url(#win)"><rect x="0.8" y="0.5" width="11" height="11" rx="0.8"/><rect x="12.8" y="0.5" width="11" height="11" rx="0.8"/><rect x="0.8" y="12.5" width="11" height="11" rx="0.8"/><rect x="12.8" y="12.5" width="11" height="11" rx="0.8"/></g>
</svg>
<!-- search pill -->
<div class="a" style="left:315px;top:728px;width:220px;height:32px;background:#333333;border:1px solid #3f3f3f;border-radius:16px;overflow:hidden"></div>
<svg class="a" style="left:325px;top:734px" width="18" height="19" viewBox="0 0 18 19"><circle cx="7.5" cy="7.8" r="6" stroke="#e8e8e8" stroke-width="1.7" fill="none"/><path d="M11.8 12.2 L16.5 17" stroke="#e8e8e8" stroke-width="1.9"/></svg>
<div class="t" style="left:352px;top:737.5px;font-size:13px;color:#d8d8d8">Search</div>
<svg class="a" style="left:480px;top:724px" width="55" height="40" viewBox="0 0 55 40">
  <defs><linearGradient id="ice" x1="0" y1="0" x2="1" y2="0.3"><stop offset="0" stop-color="#f2f6fc"/><stop offset="1" stop-color="#a8c8e8"/></linearGradient></defs>
  <path d="M7 30.5 Q9 26 18 24.5 L44 19 Q52 18.3 52.3 20.5 Q51 27 46 31 Q44 33 40 33 L10 33 Q6.5 33 7 30.5Z" fill="url(#ice)"/>
  <path d="M12.5 10 Q12 7 15 7.5 Q17 6.8 19.5 7.3 Q22 6.8 22 9.5 Q23 12 26 12.3 L31 12.5 Q36.5 13 37 19 L38.5 25.5 Q38.5 27.5 36.5 26.8 L35 22.5 Q33 24.5 30.5 24.5 L30 30 L26.5 30 L26.5 25 Q22 25.5 19.5 24 L19.5 29.5 L16 29.5 L15.5 21.5 Q13 17 13 14 Q12 12 12.5 10Z" fill="#e9e5ef"/>
  <path d="M26 14 Q32 13 36 18 Q34 22 30 22 Q25 20 26 14Z" fill="#f4f2f8" opacity="0.8"/>
  <circle cx="15.5" cy="11.2" r="0.7" fill="#5a5a6a"/><circle cx="19" cy="11.2" r="0.7" fill="#5a5a6a"/><circle cx="17.2" cy="13.3" r="0.8" fill="#5a5a6a"/>
  <path d="M36.5 21 L38.5 25.5" stroke="#8a8aa0" stroke-width="1.2"/>
</svg>
<!-- task view -->
<svg class="a" style="left:546px;top:732px" width="26" height="24" viewBox="0 0 26 24"><rect x="0.8" y="6.8" width="18.4" height="16" rx="1.5" fill="#7c7c7c"/><rect x="6.8" y="0.7" width="18.2" height="16.2" rx="1.5" fill="#e4e4e4"/><rect x="6.8" y="6.8" width="12.4" height="10.1" fill="#b8b8b8"/></svg>
<!-- meet -->
<svg class="a" style="left:590px;top:732px" width="25" height="24" viewBox="0 0 25 24"><defs><linearGradient id="mt" x1="0" y1="0" x2="1" y2="1"><stop offset="0" stop-color="#8c7ff4"/><stop offset="1" stop-color="#5b4fd8"/></linearGradient></defs><path d="M12.8 0.5 A11.3 11.3 0 1 1 12.8 23.2 H1.5 Q3.5 21 3.2 18.5 A11.3 11.3 0 0 1 12.8 0.5Z" fill="url(#mt)"/><rect x="6.5" y="8" width="9" height="8" rx="1.2" fill="#fbfbff"/><path d="M16 11 L19.5 8.5 V15.5 L16 13Z" fill="#e8e6ff"/></svg>
<!-- explorer active -->
<div class="a" style="left:627px;top:724px;width:40px;height:40px;background:#292929;border:1px solid #323232;border-radius:5px"></div>
<svg class="a" style="left:634px;top:732px" width="26" height="24" viewBox="0 0 26 24"><path d="M1 3 Q1 1 3 1 H9.5 L12 3.5 H23 Q25 3.5 25 5.5 V21 Q25 23 23 23 H3 Q1 23 1 21Z" fill="#e3a81e"/><path d="M1 7 Q1 5.5 2.5 5.5 H23.5 Q25 5.5 25 7 V21 Q25 23 23 23 H3 Q1 23 1 21Z" fill="#fbd45a"/><rect x="6" y="15" width="14" height="8.5" rx="1.5" fill="#1f6fd0"/><rect x="6" y="15" width="14" height="3" rx="1.2" fill="#3a8ae6"/></svg>
<div class="a" style="left:639px;top:760px;width:16px;height:3px;background:#4cc2ff;border-radius:1.5px"></div>
<!-- edge -->
<svg class="a" style="left:678px;top:731px" width="26" height="26" viewBox="0 0 26 26"><defs><linearGradient id="eg1" x1="0" y1="0" x2="0.6" y2="1"><stop offset="0" stop-color="#2a8ef0"/><stop offset="1" stop-color="#1466c8"/></linearGradient><linearGradient id="eg2" x1="0" y1="0" x2="1" y2="0.6"><stop offset="0" stop-color="#3cc4f2"/><stop offset="0.55" stop-color="#36d0b0"/><stop offset="1" stop-color="#6ae262"/></linearGradient></defs>
<circle cx="13" cy="12.8" r="12" fill="url(#eg1)"/>
<path d="M1.5 10 Q3.5 1 13 0.8 Q22.5 1 25 10.5 Q25.5 19 18.5 20.5 Q13.5 21 12.5 17 Q17 15.5 15 11.5 Q12.5 8.5 8 9 Q4 9.5 1.5 10Z" fill="url(#eg2)"/>
<path d="M8 9.5 Q12.5 8.5 15 11.5 Q16.5 14.5 12.5 17 Q10 14.5 10.5 12.5 Q9.5 10.5 8 9.5Z" fill="#0c2f6a" opacity="0.9"/>
</svg>
<!-- store -->
<svg class="a" style="left:722px;top:732px" width="25" height="25" viewBox="0 0 25 25"><path d="M7 6 V3 Q7 1 9 1 H16 Q18 1 18 3 V6" stroke="#3aa0e0" stroke-width="1.8" fill="none"/><path d="M1 6 H24 V21 Q24 24 21 24 H4 Q1 24 1 21Z" fill="#f4f4f4"/><rect x="7.5" y="10" width="4.5" height="4.5" fill="#f0502a"/><rect x="13" y="10" width="4.5" height="4.5" fill="#7cb800"/><rect x="7.5" y="15.5" width="4.5" height="4.5" fill="#00a2ee"/><rect x="13" y="15.5" width="4.5" height="4.5" fill="#f8b800"/></svg>
<!-- tray -->
<svg class="a" style="left:783px;top:739px" width="13" height="8" viewBox="0 0 13 8"><path d="M1 7 L6.5 1.5 L12 7" stroke="#f0f0f0" stroke-width="1.4" fill="none"/></svg>
<svg class="a" style="left:812px;top:735px" width="19" height="19" viewBox="0 0 19 19"><path d="M2 8 Q2.5 2 9 1.8 Q13.5 1.8 15.5 5.5" stroke="#f0f0f0" stroke-width="1.3" fill="none"/><path d="M15.8 1.5 V5.8 H11.5" stroke="#f0f0f0" stroke-width="1.3" fill="none"/><path d="M2.5 17.5 V13.2 H6.8" stroke="#f0f0f0" stroke-width="1.3" fill="none"/><path d="M2.8 13.5 Q4.5 16.5 8 17" stroke="#f0f0f0" stroke-width="1.3" fill="none"/><circle cx="13.5" cy="13.2" r="4" fill="#f7a21b"/></svg>
<svg class="a" style="left:844px;top:735px" width="18" height="18" viewBox="0 0 18 18"><rect x="1" y="2" width="12" height="10" rx="1" stroke="#f0f0f0" stroke-width="1.2" fill="none"/><path d="M4 15.5 H11 M7 12 V15.5" stroke="#f0f0f0" stroke-width="1.2"/><rect x="12.5" y="0.8" width="4" height="6" rx="1" stroke="#f0f0f0" stroke-width="1.1" fill="#1c1c1c"/><path d="M14.5 7 V16.5" stroke="#f0f0f0" stroke-width="1.1"/></svg>
<svg class="a" style="left:870px;top:735px" width="17" height="18" viewBox="0 0 17 18"><path d="M1.3 6.5 H4.3 L8.3 3 V9.5" stroke="#f0f0f0" stroke-width="1.2" fill="none" stroke-linejoin="round"/><path d="M1.3 6.5 V11.5 H4.3 L6 13" stroke="#f0f0f0" stroke-width="1.2" fill="none"/><circle cx="11.5" cy="12.3" r="4.8" fill="#f0f0f0"/><path d="M9.6 10.4 L13.4 14.2 M13.4 10.4 L9.6 14.2" stroke="#1c1c1c" stroke-width="1.2"/></svg>
<svg class="a" style="left:892px;top:734px" width="18" height="18" viewBox="0 0 18 18"><rect x="1.6" y="6" width="13.6" height="9.2" rx="2" stroke="#f0f0f0" stroke-width="1.2" fill="none"/><rect x="3.6" y="8" width="9.6" height="5.2" fill="#f0f0f0"/><rect x="15.6" y="8.3" width="1.8" height="4.6" rx="0.5" fill="#f0f0f0"/><path d="M6 0.8 L2.2 7.8 H5.3 L3.6 12 L8.8 5.6 H5.8 L7.6 0.8Z" fill="#f0f0f0" stroke="#1c1c1c" stroke-width="1"/></svg>
<div class="t" style="left:930px;top:730.5px;font-size:11.5px;color:#fff;letter-spacing:0.1px">12:56 PM</div>
<div class="t" style="left:926px;top:746.5px;font-size:12px;color:#fff;letter-spacing:0.1px">2/27/2024</div>
<svg class="a" style="left:989px;top:736px" width="15" height="17" viewBox="0 0 15 17"><path d="M7.5 1 Q12.5 1 12.5 7 V11 L14.3 13.8 H0.7 L2.5 11 V7 Q2.5 1 7.5 1Z" fill="#9ee6fb"/><path d="M5.5 15 Q7.5 17 9.5 15" stroke="#9ee6fb" stroke-width="1.4" fill="none"/></svg>
</body></html>
